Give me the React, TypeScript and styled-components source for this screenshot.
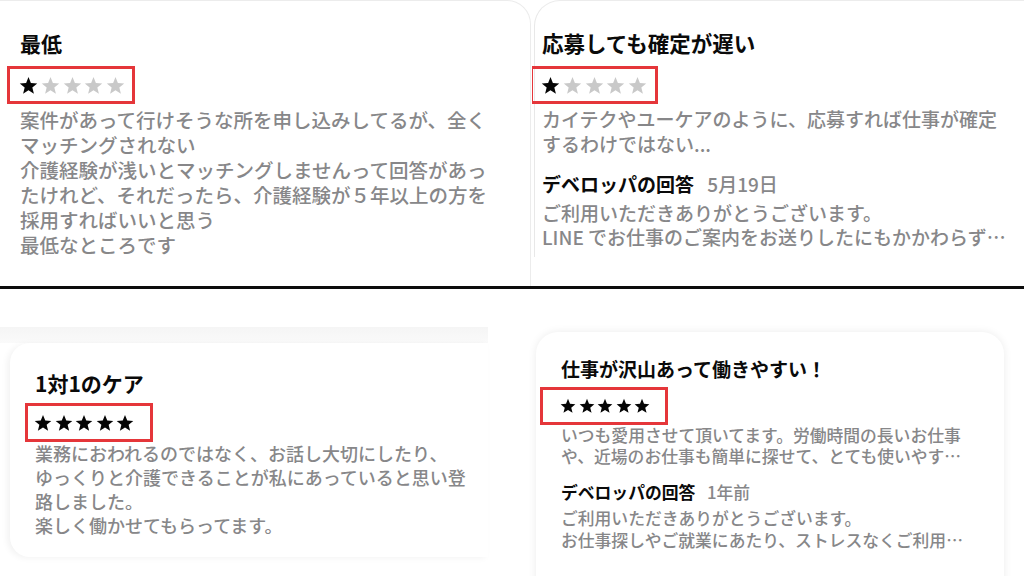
import React from "react";
import styled, { createGlobalStyle, css } from "styled-components";

const GlobalStyle = createGlobalStyle`
  html, body { margin: 0; padding: 0; background: #ffffff; }
  body {
    font-family: "Noto Sans CJK JP", "Noto Sans", sans-serif;
    color: #000;
    -webkit-font-smoothing: antialiased;
  }
  #root { width: 1024px; height: 576px; overflow: hidden; }
`;

type Metrics = {
  title: number;
  titleLh: number;
  titleGap: number;
  boxH: number;
  boxShift: number;
  boxPad: number;
  star: number;
  starGap: number;
  body: number;
  bodyLh: number;
  bodyGap: number;
  headGap?: number;
  headLh?: number;
  replyGap?: number;
  replyLh?: number;
};

type Review = {
  title: string;
  rating: number;
  lines: string[];
  reply?: { date: string; lines: string[] };
};

/* ---------- page frame ---------- */

const Board = styled.main`
  width: 1024px;
  height: 576px;
  display: grid;
  grid-template-rows: 286px 3px 287px;
  background: #fff;
  overflow: hidden;
`;

const Row = styled.section<{ $cols: string }>`
  display: grid;
  grid-template-columns: ${(p) => p.$cols};
  min-height: 0;
  overflow: hidden;
`;

const Divider = styled.div`
  background: #0c0c0c;
`;

const Shot = styled.div`
  display: flex;
  flex-direction: column;
  align-items: flex-start;
  min-width: 0;
  overflow: hidden;
`;

/* ---------- cards, each cropped differently ---------- */

type CardKind = "openRight" | "openLeft" | "floating" | "raised";

const cardShapes: Record<CardKind, ReturnType<typeof css>> = {
  openRight: css`
    margin-left: -24px;
    width: calc(100% + 23px);
    height: 100%;
    border-top: 1px solid #ececec;
    border-right: 1px solid #ececec;
    border-top-right-radius: 24px;
    padding: 28px 0 0 44px;
  `,
  openLeft: css`
    margin-left: 2px;
    width: calc(100% + 40px);
    height: 257px;
    border-top: 1px solid #ececec;
    border-left: 1px solid #e8e8e8;
    border-top-left-radius: 26px;
    padding: 28px 0 0 7px;
  `,
  floating: css`
    margin-left: 10px;
    width: 478px;
    height: 214px;
    border-radius: 20px 0 0 20px;
    box-shadow: -3px 1px 6px rgba(0, 0, 0, 0.05);
    padding: 27px 0 0 25px;
  `,
  raised: css`
    margin: 43px 0 0 24px;
    width: 468px;
    height: 270px;
    border-radius: 22px;
    box-shadow: 0 0 9px rgba(0, 0, 0, 0.08);
    padding: 25px 0 0 25px;
  `,
};

const Card = styled.article<{ $kind: CardKind }>`
  box-sizing: border-box;
  flex: none;
  background: #fff;
  display: flex;
  flex-direction: column;
  align-items: flex-start;
  ${(p) => cardShapes[p.$kind]}
`;

const GhostStrip = styled.div`
  margin-top: 38px;
  width: 488px;
  height: 16px;
  flex: none;
  background: linear-gradient(#f5f5f5, #fafafa);
`;

/* ---------- review contents ---------- */

const Title = styled.h3<{ $m: Metrics }>`
  margin: 0 0 ${(p) => p.$m.titleGap}px;
  font-size: ${(p) => p.$m.title}px;
  line-height: ${(p) => p.$m.titleLh}px;
  font-weight: 700;
  color: #0a0a0a;
  white-space: nowrap;
`;

const RatingBox = styled.div<{ $m: Metrics }>`
  box-sizing: border-box;
  width: 128px;
  height: ${(p) => p.$m.boxH}px;
  margin-left: ${(p) => p.$m.boxShift}px;
  padding-left: ${(p) => p.$m.boxPad}px;
  border: 3px solid #e5363a;
  display: flex;
  align-items: center;
  gap: ${(p) => p.$m.starGap}px;
`;

const StarIcon = styled.svg<{ $on: boolean; $size: number }>`
  width: ${(p) => p.$size}px;
  height: ${(p) => p.$size}px;
  flex: none;
  fill: ${(p) => (p.$on ? "#050505" : "#c9c9c9")};
`;

const Body = styled.div<{ $size: number; $lh: number; $gap: number }>`
  margin-top: ${(p) => p.$gap}px;
  font-size: ${(p) => p.$size}px;
  line-height: ${(p) => p.$lh}px;
  font-weight: 500;
  color: #878789;
`;

const Line = styled.span`
  display: block;
  white-space: nowrap;
`;

const ReplyHead = styled.div<{ $size: number; $lh: number; $gap: number }>`
  margin-top: ${(p) => p.$gap}px;
  font-size: ${(p) => p.$size}px;
  line-height: ${(p) => p.$lh}px;
  display: flex;
  align-items: baseline;
  gap: 0.7em;
  white-space: nowrap;
`;

const ReplyName = styled.span`
  font-weight: 700;
  color: #0a0a0a;
`;

const ReplyDate = styled.span`
  font-weight: 500;
  color: #878789;
`;

/* five-point star with fairly plump inner corners */
const starPoints = (() => {
  const cx = 12;
  const cy = 12.9;
  const outer = 11.6;
  const inner = outer * 0.44;
  const pts: string[] = [];
  for (let i = 0; i < 10; i++) {
    const r = i % 2 === 0 ? outer : inner;
    const a = -Math.PI / 2 + (i * Math.PI) / 5;
    pts.push(`${(cx + r * Math.cos(a)).toFixed(2)},${(cy + r * Math.sin(a)).toFixed(2)}`);
  }
  return pts.join(" ");
})();

const Star = ({ on, size }: { on: boolean; size: number }) => (
  <StarIcon $on={on} $size={size} viewBox="0 0 24 24" aria-hidden="true">
    <polygon points={starPoints} />
  </StarIcon>
);

const ReviewBody = ({ review, m }: { review: Review; m: Metrics }) => (
  <>
    <Title $m={m}>{review.title}</Title>
    <RatingBox $m={m} aria-label={`${review.rating} / 5`}>
      {[0, 1, 2, 3, 4].map((i) => (
        <Star key={i} on={i < review.rating} size={m.star} />
      ))}
    </RatingBox>
    <Body $size={m.body} $lh={m.bodyLh} $gap={m.bodyGap}>
      {review.lines.map((l, i) => (
        <Line key={i}>{l}</Line>
      ))}
    </Body>
    {review.reply && (
      <>
        <ReplyHead $size={m.body} $lh={m.headLh ?? m.bodyLh} $gap={m.headGap ?? 12}>
          <ReplyName>デベロッパの回答</ReplyName>
          <ReplyDate>{review.reply.date}</ReplyDate>
        </ReplyHead>
        <Body $size={m.body} $lh={m.replyLh ?? m.bodyLh} $gap={m.replyGap ?? 4}>
          {review.reply.lines.map((l, i) => (
            <Line key={i}>{l}</Line>
          ))}
        </Body>
      </>
    )}
  </>
);

/* ---------- data ---------- */

const reviews: Record<string, { review: Review; m: Metrics }> = {
  worst: {
    review: {
      title: "最低",
      rating: 1,
      lines: [
        "案件があって行けそうな所を申し込みしてるが、全く",
        "マッチングされない",
        "介護経験が浅いとマッチングしませんって回答があっ",
        "たけれど、それだったら、介護経験が５年以上の方を",
        "採用すればいいと思う",
        "最低なところです",
      ],
    },
    m: {
      title: 21, titleLh: 28, titleGap: 9,
      boxH: 38, boxShift: -13, boxPad: 9,
      star: 19, starGap: 2.8,
      body: 19.5, bodyLh: 25, bodyGap: 3,
    },
  },
  slow: {
    review: {
      title: "応募しても確定が遅い",
      rating: 1,
      lines: [
        "カイテクやユーケアのように、応募すれば仕事が確定",
        "するわけではない...",
      ],
      reply: {
        date: "5月19日",
        lines: [
          "ご利用いただきありがとうございます。",
          "LINE でお仕事のご案内をお送りしたにもかかわらず…",
        ],
      },
    },
    m: {
      title: 21.5, titleLh: 28, titleGap: 9,
      boxH: 38, boxShift: -12, boxPad: 8,
      star: 19, starGap: 2.8,
      body: 19, bodyLh: 25, bodyGap: 1.5,
      headGap: 15, headLh: 25, replyGap: 5, replyLh: 24.5,
    },
  },
  care: {
    review: {
      title: "1対1のケア",
      rating: 5,
      lines: [
        "業務におわれるのではなく、お話し大切にしたり、",
        "ゆっくりと介護できることが私にあっていると思い登",
        "路しました。",
        "楽しく働かせてもらってます。",
      ],
    },
    m: {
      title: 21, titleLh: 26, titleGap: 7,
      boxH: 39, boxShift: -10, boxPad: 6,
      star: 18, starGap: 2.5,
      body: 18, bodyLh: 24, bodyGap: -1,
    },
  },
  plenty: {
    review: {
      title: "仕事が沢山あって働きやすい！",
      rating: 5,
      lines: [
        "いつも愛用させて頂いてます。労働時間の長いお仕事",
        "や、近場のお仕事も簡単に探せて、とても使いやす…",
      ],
      reply: {
        date: "1年前",
        lines: [
          "ご利用いただきありがとうございます。",
          "お仕事探しやご就業にあたり、ストレスなくご利用…",
        ],
      },
    },
    m: {
      title: 19, titleLh: 24, titleGap: 6,
      boxH: 38, boxShift: -21, boxPad: 17,
      star: 16, starGap: 2.5,
      body: 16.8, bodyLh: 21, bodyGap: -0.5,
      headGap: 14.5, headLh: 22, replyGap: 4, replyLh: 22,
    },
  },
};

export default function App() {
  return (
    <>
      <GlobalStyle />
      <Board>
        <Row $cols="532px 492px">
          <Shot>
            <Card $kind="openRight">
              <ReviewBody {...reviews.worst} />
            </Card>
          </Shot>
          <Shot>
            <Card $kind="openLeft">
              <ReviewBody {...reviews.slow} />
            </Card>
          </Shot>
        </Row>
        <Divider />
        <Row $cols="512px 512px">
          <Shot>
            <GhostStrip />
            <Card $kind="floating">
              <ReviewBody {...reviews.care} />
            </Card>
          </Shot>
          <Shot>
            <Card $kind="raised">
              <ReviewBody {...reviews.plenty} />
            </Card>
          </Shot>
        </Row>
      </Board>
    </>
  );
}
